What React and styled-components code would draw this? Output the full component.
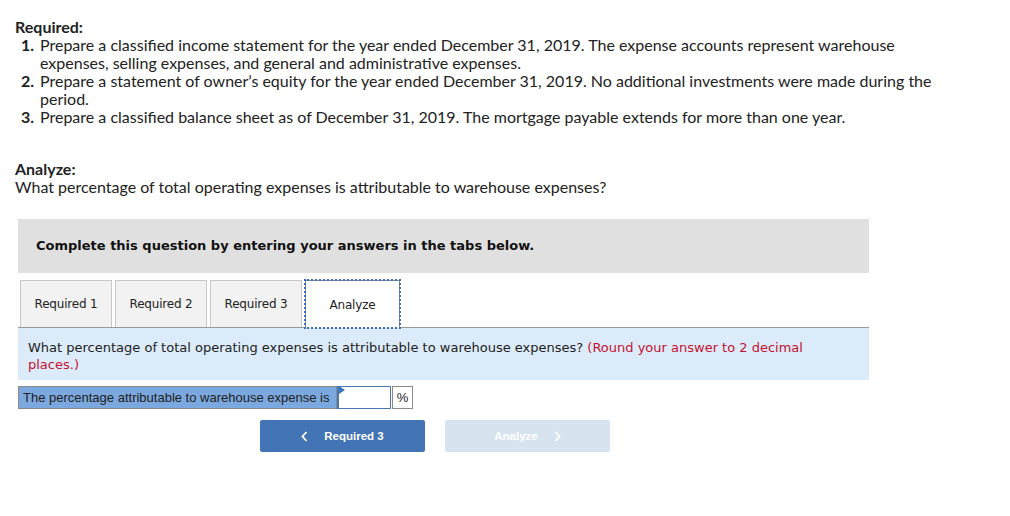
import React from 'react';
import styled, { createGlobalStyle } from 'styled-components';

const GlobalStyle = createGlobalStyle`
  body {
    margin: 0;
    background: #fff;
  }
`;

const Page = styled.div`
  padding: 18px 0 0 15px;
  width: 995px;
  font-family: Lato, "Open Sans", sans-serif;
  font-size: 16px;
  line-height: 18px;
  color: #222;
`;

const Heading = styled.div`
  font-weight: bold;
`;

const List = styled.ol`
  margin: 0;
  padding: 0;
  list-style: none;
`;

const Item = styled.li`
  display: flex;
  width: 925px;
`;

const Num = styled.span`
  flex: 0 0 25px;
  text-align: right;
  padding-right: 6px;
  box-sizing: border-box;
  font-weight: bold;
`;

const Section = styled.div`
  margin-top: 34px;
`;

const Prompt = styled.div`
  margin: 23px 0 0 3px;
  width: 851px;
  height: 54px;
  background: #e0e0e0;
  display: flex;
  align-items: center;
  padding-left: 18px;
  box-sizing: border-box;
  font-family: "DejaVu Sans", Verdana, sans-serif;
  font-size: 13px;
  font-weight: bold;
  color: #111;
`;

const TabBar = styled.div`
  margin: 7px 0 0 3px;
  width: 851px;
  display: flex;
  align-items: flex-end;
  gap: 3px;
  padding-left: 2px;
  box-sizing: border-box;
  border-bottom: 1px solid #999;
`;

const Tab = styled.div`
  width: ${p => p.$active ? '95px' : '92px'};
  height: ${p => p.$active ? '48px' : '47px'};
  box-sizing: border-box;
  display: flex;
  align-items: center;
  justify-content: center;
  font-family: "DejaVu Sans", Verdana, sans-serif;
  font-size: 12px;
  color: #222;
  letter-spacing: -0.2px;
  background: ${p => p.$active ? '#fff' : '#f2f2f2'};
  border: ${p => p.$active ? '1px solid #888' : '1px solid #c8c8c8'};
  border-bottom: none;
  outline: ${p => p.$active ? '2px dotted #3a6fc0' : 'none'};
  outline-offset: -1px;
  margin-bottom: ${p => p.$active ? '-1px' : '0'};
  position: relative;
`;

const Question = styled.div`
  margin-left: 3px;
  width: 851px;
  height: 52px;
  background: #dcebf9;
  padding: 11px 60px 0 10px;
  box-sizing: border-box;
  font-family: "DejaVu Sans", Verdana, sans-serif;
  font-size: 13px;
  line-height: 17px;
  color: #222;
`;

const Red = styled.span`
  color: #c41230;
`;

const AnswerRow = styled.div`
  margin: 6px 0 0 3px;
  display: flex;
  height: 23px;
  font-family: "Liberation Sans", Arial, sans-serif;
  font-size: 13px;
  color: #222;
`;

const Label = styled.div`
  width: 319px;
  background: #7ba8de;
  border: 1px solid #8a8a8a;
  box-sizing: border-box;
  display: flex;
  align-items: center;
  padding-left: 4px;
`;

const InputWrap = styled.div`
  position: relative;
  width: 54px;
  border: 1px solid #4a76b5;
  border-left: 2px solid #4a76b5;
  box-sizing: border-box;
  background: #fff;
`;

const Flag = styled.span`
  position: absolute;
  left: 0;
  top: -1px;
  width: 0;
  height: 0;
  border-top: 4px solid transparent;
  border-bottom: 4px solid transparent;
  border-left: 6px solid #3a75c4;
`;

const Input = styled.input`
  width: 100%;
  height: 100%;
  border: none;
  outline: none;
  padding: 0;
  background: transparent;
`;

const Unit = styled.div`
  width: 21px;
  border: 1px solid #8a8a8a;
  box-sizing: border-box;
  display: flex;
  align-items: center;
  justify-content: center;
  margin-left: 1px;
`;

const NavRow = styled.div`
  margin: 11px 0 0 245px;
  display: flex;
  gap: 20px;
`;

const NavButton = styled.button`
  width: 165px;
  height: 32px;
  border: none;
  border-radius: 2px;
  background: ${p => p.$disabled ? '#d8e3f0' : '#4274b6'};
  color: #fff;
  font-family: "Liberation Sans", Arial, sans-serif;
  font-size: 11.5px;
  font-weight: bold;
  display: flex;
  align-items: center;
  justify-content: center;
  gap: 16px;
  padding: 0;
  cursor: ${p => p.$disabled ? 'default' : 'pointer'};
`;

const Chevron = ({ dir }) => (
  <svg width="7" height="11" viewBox="0 0 7 11">
    <path
      d={dir === 'left' ? 'M5.5 1 L1.5 5.5 L5.5 10' : 'M1.5 1 L5.5 5.5 L1.5 10'}
      fill="none"
      stroke="#fff"
      strokeWidth="1.8"
    />
  </svg>
);

const items = [
  'Prepare a classified income statement for the year ended December 31, 2019. The expense accounts represent warehouse expenses, selling expenses, and general and administrative expenses.',
  'Prepare a statement of owner\u2019s equity for the year ended December 31, 2019. No additional investments were made during the period.',
  'Prepare a classified balance sheet as of December 31, 2019. The mortgage payable extends for more than one year.',
];

export default function App() {
  return (
    <Page>
      <GlobalStyle />
      <Heading>Required:</Heading>
      <List>
        {items.map((t, i) => (
          <Item key={i}>
            <Num>{i + 1}.</Num>
            <span>{t}</span>
          </Item>
        ))}
      </List>
      <Section>
        <Heading>Analyze:</Heading>
        <div>What percentage of total operating expenses is attributable to warehouse expenses?</div>
      </Section>
      <Prompt>Complete this question by entering your answers in the tabs below.</Prompt>
      <TabBar>
        <Tab>Required 1</Tab>
        <Tab>Required 2</Tab>
        <Tab>Required 3</Tab>
        <Tab $active>Analyze</Tab>
      </TabBar>
      <Question>
        What percentage of total operating expenses is attributable to warehouse expenses?{' '}
        <Red>(Round your answer to 2 decimal places.)</Red>
      </Question>
      <AnswerRow>
        <Label>The percentage attributable to warehouse expense is</Label>
        <InputWrap>
          <Flag />
          <Input type="text" />
        </InputWrap>
        <Unit>%</Unit>
      </AnswerRow>
      <NavRow>
        <NavButton>
          <Chevron dir="left" />
          Required 3
        </NavButton>
        <NavButton $disabled>
          Analyze
          <Chevron dir="right" />
        </NavButton>
      </NavRow>
    </Page>
  );
}
